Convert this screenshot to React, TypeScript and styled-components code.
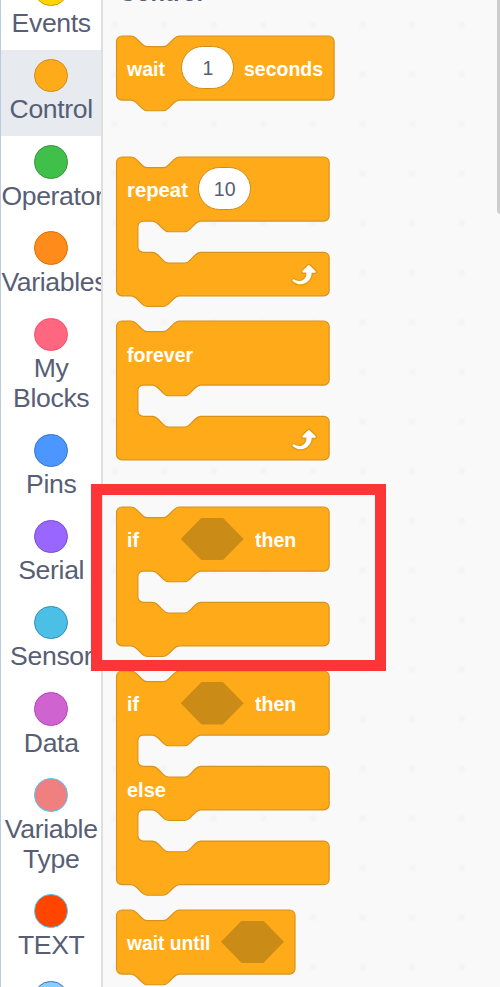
import React from "react";
import styled, { createGlobalStyle } from "styled-components";

const UNIT = 1.335;

const GlobalStyle = createGlobalStyle`
  * { box-sizing: border-box; }
  body { margin: 0; overflow: hidden; font-family: "Liberation Sans", Arial, sans-serif; }
`;

const Editor = styled.div`
  position: relative;
  display: flex;
  width: 500px;
  height: 987px;
  overflow: hidden;
  background: #f9f9f9;
`;

const Sidebar = styled.nav`
  flex: none;
  width: 103px;
  height: 987px;
  overflow: hidden;
  background: #fff;
  border-left: 1.6px solid #bccae0;
  border-right: 2px solid #dfdfe0;
`;

const CategoryList = styled.div`
  display: flex;
  flex-direction: column;
  margin-top: -36.6px;
`;

const Category = styled.div<{ $active?: boolean }>`
  flex: none;
  padding: 9.4px 0 10.5px;
  background: ${(p) => (p.$active ? "#e7ebf0" : "transparent")};
`;

const Bubble = styled.div<{ $fill: string; $ring: string }>`
  width: 33.4px;
  height: 33.4px;
  margin: 0 auto;
  border-radius: 50%;
  background: ${(p) => p.$fill};
  border: 1.6px solid ${(p) => p.$ring};
`;

const CategoryName = styled.div`
  margin-top: 3px;
  padding-left: 0.4px;
  font-size: 26.6px;
  line-height: 29.9px;
  letter-spacing: -0.35px;
  text-align: center;
  color: #575e75;
`;

const Flyout = styled.main`
  flex: 1;
  display: flex;
  flex-direction: column;
  align-items: flex-start;
  padding-left: 13px;
  background-image: radial-gradient(circle, #f4f4f4 0 1.5px, #f7f7f7 3px, transparent 6px);
  background-size: 49.6px 49.6px;
  background-position: -13px 0;
`;

const Heading = styled.h2`
  flex: none;
  height: 30px;
  margin: -20px 0 25.6px;
  padding-left: 3px;
  font-size: 23.7px;
  line-height: 27px;
  font-weight: bold;
  color: #575e75;
`;

const BlockFrame = styled.div<{ $width: number; $rows: number; $after: number }>`
  position: relative;
  flex: none;
  display: flex;
  flex-direction: column;
  width: ${(p) => p.$width}px;
  height: ${(p) => p.$rows * UNIT}px;
  margin-bottom: ${(p) => p.$after}px;
`;

const Shape = styled.svg`
  position: absolute;
  inset: 0;
  width: 100%;
  height: 100%;
  overflow: visible;
  path {
    fill: #ffab19;
    stroke: #d7921b;
    stroke-width: 0.85;
  }
`;

const Row = styled.div<{ $units: number; $end?: boolean }>`
  position: relative;
  display: flex;
  align-items: center;
  justify-content: ${(p) => (p.$end ? "flex-end" : "flex-start")};
  height: ${(p) => p.$units * UNIT}px;
  padding: 0 10.4px 0 11px;
`;

const Mouth = styled.div`
  height: ${24 * UNIT}px;
`;

const Label = styled.span<{ $width: number; $stretch?: number }>`
  flex: none;
  width: ${(p) => p.$width}px;
  margin-top: 2.4px;
  font-size: 20.6px;
  line-height: 24px;
  font-weight: bold;
  white-space: nowrap;
  color: #fff;
  transform: scaleX(${(p) => p.$stretch ?? 0.946});
  transform-origin: left;
`;

const NumberInput = styled.span`
  flex: none;
  display: flex;
  align-items: center;
  justify-content: center;
  width: 53px;
  height: 43px;
  margin-right: 10px;
  border: 1.3px solid #cf8b17;
  border-radius: 22px;
  background: #fff;
  font-size: 21px;
  color: #575e75;
  span { transform: scaleX(0.93); }
`;

const HexSlot = styled.span`
  flex: none;
  width: 63px;
  height: 42.6px;
  margin-right: 11px;
  background: #cb8c17;
  clip-path: polygon(0 50%, 33% 0, 67% 0, 100% 50%, 67% 100%, 33% 100%);
`;

const ArrowSvg = styled.svg`
  width: ${24 * UNIT}px;
  height: ${24 * UNIT}px;
`;

const Highlight = styled.div`
  position: absolute;
  left: 91px;
  top: 484px;
  width: 295px;
  height: 187px;
  border: 11px solid #fc3537;
`;

const Scrollbar = styled.div`
  position: absolute;
  right: -5px;
  top: -8px;
  width: 8px;
  height: 222px;
  border-radius: 4px;
  background: #cdcdce;
`;

const NOTCH = "c2,0 3,1 4,2l4,4c1,1 2,2 4,2h12c2,0 3,-1 4,-2l4,-4c1,-1 2,-2 4,-2";
const TAB = "c-2,0 -3,1 -4,2l-4,4c-1,1 -2,2 -4,2h-12c-2,0 -3,-1 -4,-2l-4,-4c-1,-1 -2,-2 -4,-2";

// Builds a block outline: a head row, then one mouth and arm for every 24/32 unit pair.
function outline(width: number, mouths: number, closed: boolean) {
  let d = `M0,4A4,4 0 0,1 4,0H11${NOTCH}H${width - 4}a4,4 0 0,1 4,4v40a4,4 0 0,1 -4,4`;
  for (let i = 0; i < mouths; i++) {
    d += `H63${TAB}h-7a4,4 0 0,0 -4,4v15.4a4,4 0 0,0 4,4h7${NOTCH}H${width - 4}a4,4 0 0,1 4,4v24.6a4,4 0 0,1 -4,4`;
  }
  return d + (closed ? "" : `H47${TAB}`) + "H4a4,4 0 0,1 -4,-4z";
}

interface BlockProps {
  units: number;
  mouths?: number;
  closed?: boolean;
  after: number;
  children: React.ReactNode;
}

function Block({ units, mouths = 0, closed = false, after, children }: BlockProps) {
  const rows = 48 + mouths * 56;
  return (
    <BlockFrame $width={units * UNIT} $rows={rows} $after={after}>
      <Shape viewBox={`-0.4 0 ${units} ${rows}`}>
        <path d={outline(units, mouths, closed)} />
      </Shape>
      {children}
    </BlockFrame>
  );
}

function LoopArrow() {
  return (
    <ArrowSvg viewBox="0 0 24 24">
      <path fill="#e0981a" d="M23.3,11c-0.3,0.6-0.9,1-1.5,1h-1.6c-0.1,1.3-0.5,2.5-1.1,3.6c-0.9,1.7-2.3,3.2-4.1,4.1c-1.7,0.9-3.6,1.2-5.5,0.9c-1.8-0.3-3.5-1.1-4.9-2.3c-0.7-0.7-0.7-1.9,0-2.6c0.6-0.6,1.6-0.7,2.3-0.2H7c0.9,0.6,1.9,0.9,2.9,0.9s1.9-0.3,2.7-0.9c1.1-0.8,1.8-2.1,1.8-3.5h-1.5c-0.9,0-1.7-0.7-1.7-1.7c0-0.4,0.2-0.9,0.5-1.2l4.4-4.4c0.7-0.6,1.7-0.6,2.4,0L23,9.2C23.5,9.7,23.6,10.4,23.3,11z" />
      <path fill="#fff" d="M21.8,11h-2.6c0,1.5-0.3,2.9-1,4.2c-0.8,1.6-2.1,2.8-3.7,3.6c-1.5,0.8-3.3,1.1-4.9,0.8c-1.6-0.2-3.2-1-4.4-2.1c-0.4-0.3-0.4-0.9-0.1-1.2c0.3-0.4,0.9-0.4,1.2-0.1c1,0.7,2.2,1.1,3.4,1.1s2.3-0.3,3.3-1c0.9-0.6,1.6-1.5,2-2.6c0.3-0.9,0.4-1.8,0.2-2.8h-2.4c-0.4,0-0.7-0.3-0.7-0.7c0-0.2,0.1-0.3,0.2-0.4l4.4-4.4c0.3-0.3,0.7-0.3,0.9,0L22,9.8c0.3,0.3,0.4,0.6,0.3,0.9S22,11,21.8,11z" />
    </ArrowSvg>
  );
}

const categories = [
  { name: "Events", fill: "#ffd500", ring: "#cc9900" },
  { name: "Control", fill: "#ffab19", ring: "#cf8b17", active: true },
  { name: "Operators", fill: "#40bf4a", ring: "#389438" },
  { name: "Variables", fill: "#ff8c1a", ring: "#db6e00" },
  { name: "My Blocks", fill: "#ff6680", ring: "#ff4d6a" },
  { name: "Pins", fill: "#4c97ff", ring: "#3373cc" },
  { name: "Serial", fill: "#9966ff", ring: "#774dcb" },
  { name: "Sensor", fill: "#4cbfe6", ring: "#2e8eb8" },
  { name: "Data", fill: "#cf63cf", ring: "#bd42bd" },
  { name: "Variable Type", fill: "#f08080", ring: "#42ccff" },
  { name: "TEXT", fill: "#ff4500", ring: "#42ccff" },
  { name: "", fill: "#87cefa", ring: "#3373cc" },
];

export default function App() {
  return (
    <Editor>
      <GlobalStyle />
      <Sidebar>
        <CategoryList>
          {categories.map((c) => (
            <Category key={c.fill} $active={c.active}>
              <Bubble $fill={c.fill} $ring={c.ring} />
              <CategoryName>{c.name}</CategoryName>
            </Category>
          ))}
        </CategoryList>
      </Sidebar>
      <Flyout>
        <Heading>Control</Heading>
        <Block units={163} after={57.2}>
          <Row $units={48}>
            <Label $width={54}>wait</Label>
            <NumberInput><span>1</span></NumberInput>
            <Label $width={80}>seconds</Label>
          </Row>
        </Block>
        <Block units={159.3} mouths={1} after={25.6}>
          <Row $units={48}>
            <Label $width={71} $stretch={0.985}>repeat</Label>
            <NumberInput><span>10</span></NumberInput>
          </Row>
          <Mouth />
          <Row $units={32} $end><LoopArrow /></Row>
        </Block>
        <Block units={159.3} mouths={1} closed after={46.8}>
          <Row $units={48}><Label $width={70}>forever</Label></Row>
          <Mouth />
          <Row $units={32} $end><LoopArrow /></Row>
        </Block>
        <Block units={159.3} mouths={1} after={25.5}>
          <Row $units={48}>
            <Label $width={53.7}>if</Label>
            <HexSlot />
            <Label $width={50}>then</Label>
          </Row>
        </Block>
        <Block units={159.3} mouths={2} after={25}>
          <Row $units={48}>
            <Label $width={53.7}>if</Label>
            <HexSlot />
            <Label $width={50}>then</Label>
          </Row>
          <Mouth />
          <Row $units={32}><Label $width={50} $stretch={0.97}>else</Label></Row>
        </Block>
        <Block units={133.7} after={0}>
          <Row $units={48}>
            <Label $width={94} $stretch={0.935}>wait until</Label>
            <HexSlot />
          </Row>
        </Block>
      </Flyout>
      <Highlight />
      <Scrollbar />
    </Editor>
  );
}
